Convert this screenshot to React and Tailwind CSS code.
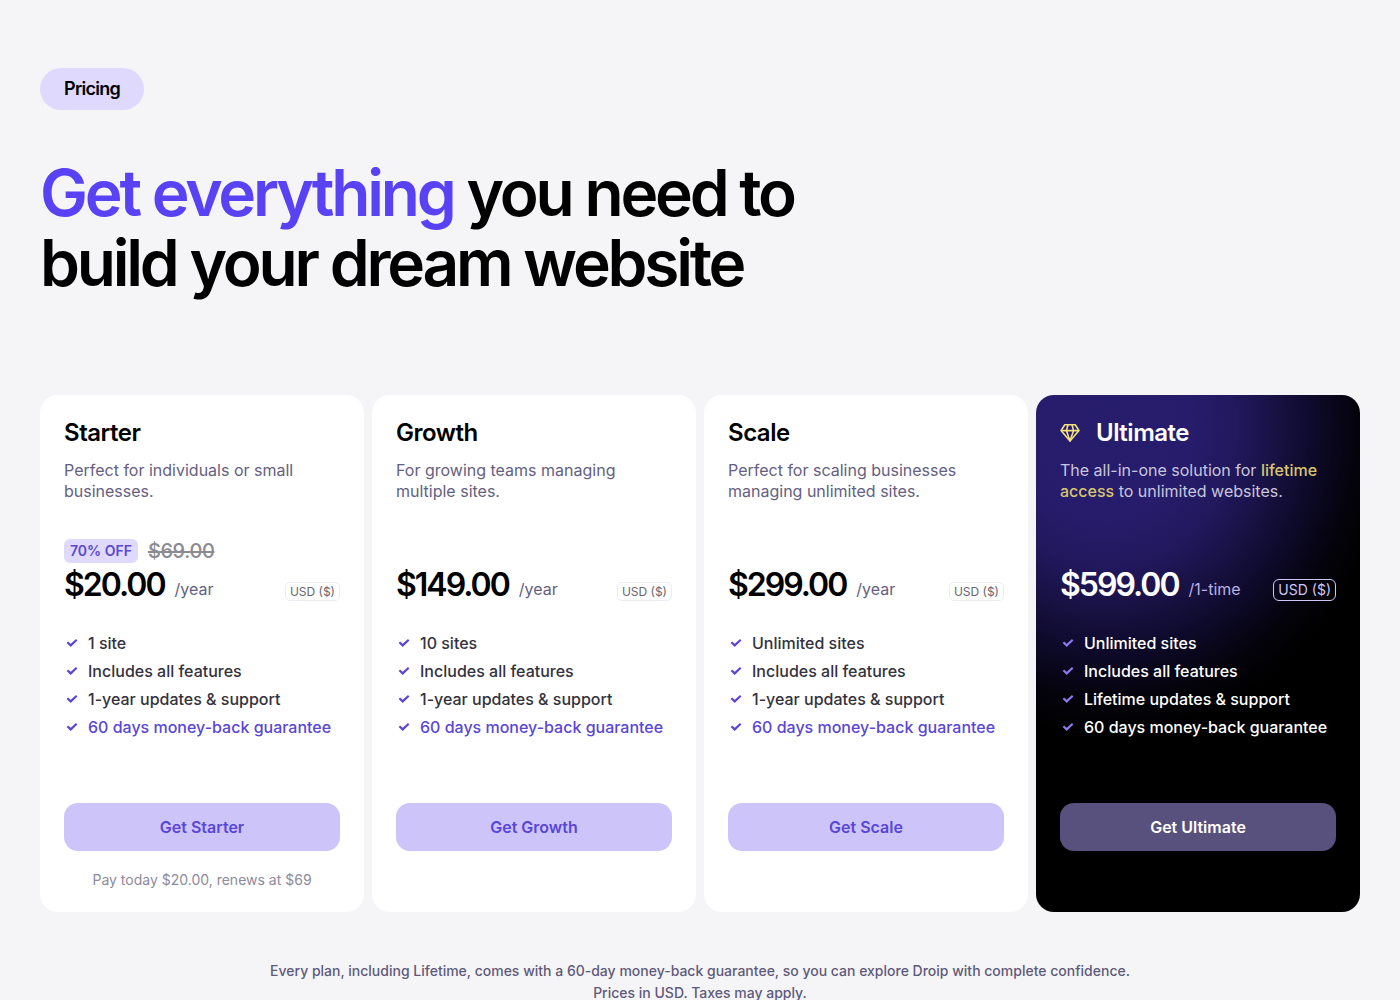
import { clsx } from "clsx";

const GUARANTEE = "60 days money-back guarantee";

const PLANS = [
  {
    name: "Starter",
    description: "Perfect for individuals or small businesses.",
    discount: "70% OFF",
    oldPrice: "$69.00",
    price: "$20.00",
    period: "/year",
    features: ["1 site", "Includes all features", "1-year updates & support", GUARANTEE],
    note: "Pay today $20.00, renews at $69",
  },
  {
    name: "Growth",
    description: "For growing teams managing multiple sites.",
    price: "$149.00",
    period: "/year",
    features: ["10 sites", "Includes all features", "1-year updates & support", GUARANTEE],
  },
  {
    name: "Scale",
    description: "Perfect for scaling businesses managing unlimited sites.",
    price: "$299.00",
    period: "/year",
    features: ["Unlimited sites", "Includes all features", "1-year updates & support", GUARANTEE],
  },
  {
    name: "Ultimate",
    description: (
      <>
        The all-in-one solution for{" "}
        <span className="font-medium text-[#d6c66f]">lifetime</span>{" "}
        <span className="font-medium text-[#d6c66f]">access</span> to unlimited websites.
      </>
    ),
    price: "$599.00",
    period: "/1-time",
    features: ["Unlimited sites", "Includes all features", "Lifetime updates & support", GUARANTEE],
    dark: true,
  },
];

export default function App() {
  return (
    <main className="min-h-screen bg-[#f5f5f8] px-10 pt-[68px] pb-16 font-['Inter',sans-serif] text-black">
      <span className="inline-flex h-[42px] items-center rounded-full bg-[#dfdafd] px-6 text-lg font-semibold tracking-[-0.04em]">
        Pricing
      </span>

      <h1 className="mt-12 text-[64px] leading-[70px] font-semibold tracking-tighter">
        <span className="text-[#5842f4]">Get everything</span> you need to
        <br />
        build your dream website
      </h1>

      <div className="mt-[97px] grid grid-cols-4 gap-2">
        {PLANS.map((plan) => (
          <PlanCard key={plan.name} plan={plan} />
        ))}
      </div>

      <p className="mt-12 text-center text-sm leading-[22px] font-medium text-[#5f5a7a]">
        Every plan, including Lifetime, comes with a 60-day money-back guarantee, so you can explore Droip with complete confidence.
        <br />
        Prices in USD. Taxes may apply.
      </p>
    </main>
  );
}

function PlanCard({ plan }) {
  const { dark } = plan;

  return (
    <section
      className={clsx(
        "flex flex-col rounded-[18px] p-6",
        dark
          ? "bg-black bg-[radial-gradient(ellipse_285px_310px_at_70px_30px,#271d6d_0%,#261c6b_30%,#21185d_46%,#181143_60%,#0d0928_74%,#04030c_88%,#000_100%)] text-white"
          : "bg-white"
      )}
    >
      <h2 className="flex items-center gap-4 text-2xl leading-7 font-semibold tracking-[-0.02em]">
        {dark && <GemIcon />}
        {plan.name}
      </h2>
      <p className={clsx("mt-[13px] min-h-[42px] text-base leading-[21px]", dark ? "text-[#c9c5dc]" : "text-[#65607f]")}>
        {plan.description}
      </p>

      <div className="mt-[37px] flex h-6 items-center gap-[10px]">
        {plan.discount && (
          <>
            <span className="flex h-6 items-center rounded-md bg-[#dfdafd] px-[6px] text-sm font-semibold text-[#5a48d0]">
              {plan.discount}
            </span>
            <s className="text-xl font-medium tracking-[-0.02em] text-[#8b8b92]">{plan.oldPrice}</s>
          </>
        )}
      </div>
      <div className="flex items-end justify-between">
        <p className="flex items-end gap-[10px]">
          <span className="text-[32px] leading-[44px] font-semibold tracking-[-2px]">{plan.price}</span>
          <span className={clsx("mb-2 text-base leading-5", dark ? "text-[#b7b0e0]" : "text-[#65607f]")}>{plan.period}</span>
        </p>
        <span
          className={clsx(
            "mb-[6px] flex items-center border px-1",
            dark
              ? "h-[22px] rounded-md border-[#cdc6f8] text-sm text-[#cdc6f8]"
              : "h-[19px] rounded-[5px] border-[#ececf3] text-xs text-[#66666d]"
          )}
        >
          USD ($)
        </span>
      </div>

      <ul className="mt-6 flex flex-col gap-1">
        {plan.features.map((feature) => (
          <li
            key={feature}
            className={clsx(
              "flex items-center gap-2 text-base font-medium",
              dark ? "text-white" : feature === GUARANTEE ? "text-[#5a46d6]" : "text-[#33323d]"
            )}
          >
            <CheckIcon className={dark ? "text-[#8a78e8]" : "text-[#5a46d6]"} />
            {feature}
          </li>
        ))}
      </ul>

      <button
        type="button"
        className={clsx(
          "mt-16 h-12 rounded-[14px] text-base font-semibold",
          dark ? "bg-[#58507d] text-white" : "bg-[#cdc5fa] text-[#5a46d6]"
        )}
      >
        Get {plan.name}
      </button>
      {plan.note && <p className="mt-5 text-center text-sm leading-[17px] text-[#8d8a9c]">{plan.note}</p>}
    </section>
  );
}

function CheckIcon({ className }) {
  return (
    <svg viewBox="0 0 16 16" className={clsx("size-4 shrink-0", className)} fill="none" stroke="currentColor" strokeWidth="2.2" aria-hidden="true">
      <path d="M3.4 7.2 6.7 10.4 12.7 4.8" />
    </svg>
  );
}

function GemIcon() {
  return (
    <svg viewBox="0 0 20 20" className="size-5 shrink-0 text-[#f5e27c]" fill="none" stroke="currentColor" strokeWidth="1.6" strokeLinejoin="round" aria-hidden="true">
      <path d="M4.8 1.8h10.4L19 7.6 10 18 1 7.6z" />
      <path d="M1 7.6h18M8 1.8 6.4 7.6 10 18l3.6-10.4L12 1.8" />
    </svg>
  );
}
